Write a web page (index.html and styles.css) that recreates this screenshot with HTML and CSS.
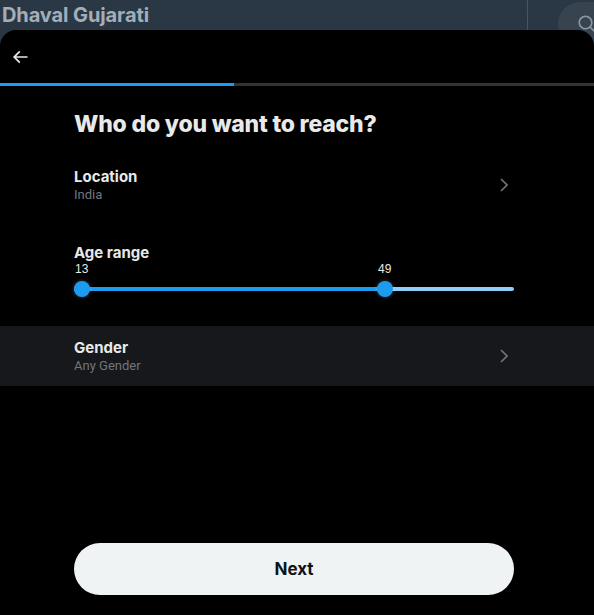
FILE: index.html
```html
<!DOCTYPE html>
<html lang="en">
<head>
<meta charset="utf-8">
<title>Who do you want to reach?</title>
<link rel="stylesheet" href="styles.css">
</head>
<body>
<div class="page">
  <header class="topbar">
    <div class="profile-name">Dhaval Gujarati</div>
    <div class="divider"></div>
    <div class="search">
      <svg viewBox="0 0 24 24" width="20" height="20"><path fill="currentColor" d="M10.25 3.75c-3.59 0-6.5 2.910-6.5 6.5s2.91 6.5 6.5 6.5c1.795 0 3.419-.726 4.596-1.904 1.178-1.177 1.904-2.801 1.904-4.596 0-3.590-2.910-6.5-6.5-6.5zm-8.5 6.5c0-4.694 3.806-8.5 8.5-8.5s8.5 3.806 8.5 8.5c0 1.986-.682 3.815-1.824 5.262l4.781 4.781-1.414 1.414-4.781-4.781c-1.447 1.142-3.276 1.824-5.262 1.824-4.694 0-8.5-3.806-8.5-8.5z"/></svg>
    </div>
  </header>

  <section class="modal">
    <div class="modal-head">
      <button class="back" aria-label="Back">
        <svg viewBox="0 0 24 24" width="20" height="20"><path fill="currentColor" d="M7.414 13l5.043 5.04-1.414 1.42L3.586 12l7.457-7.46 1.414 1.42L7.414 11H21v2H7.414z"/></svg>
      </button>
    </div>
    <div class="progress"><div class="progress-fill"></div></div>

    <h2 class="title">Who do you want to reach?</h2>

    <div class="row">
      <div class="row-text">
        <div class="row-label">Location</div>
        <div class="row-value">India</div>
      </div>
      <svg class="chev" viewBox="0 0 8 14" width="8" height="14"><path d="M1 1l6 6-6 6" fill="none" stroke="currentColor" stroke-width="1.6"/></svg>
    </div>

    <div class="age">
      <div class="row-label">Age range</div>
      <div class="slider">
        <div class="track"></div>
        <div class="track-active"></div>
        <div class="handle h-min"><span class="handle-label">13</span><span class="thumb"></span></div>
        <div class="handle h-max"><span class="handle-label">49</span><span class="thumb"></span></div>
      </div>
    </div>

    <div class="row row-hover">
      <div class="row-text">
        <div class="row-label">Gender</div>
        <div class="row-value">Any Gender</div>
      </div>
      <svg class="chev" viewBox="0 0 8 14" width="8" height="14"><path d="M1 1l6 6-6 6" fill="none" stroke="currentColor" stroke-width="1.6"/></svg>
    </div>

    <div class="footer">
      <button class="next">Next</button>
    </div>
  </section>
</div>
</body>
</html>
```

FILE: styles.css
```css
* { box-sizing: border-box; }
html, body { margin: 0; padding: 0; }
body {
  width: 594px;
  height: 615px;
  overflow: hidden;
  font-family: "Inter", "Roboto", "Liberation Sans", sans-serif;
  background: #202b36;
}
.page {
  display: flex;
  flex-direction: column;
  height: 615px;
  background: linear-gradient(180deg, #2a3846 0%, #222e3a 60%, #1c2630 100%);
}
.topbar {
  height: 30px;
  display: flex;
  align-items: flex-start;
  flex-shrink: 0;
}
.profile-name {
  margin-left: 2px;
  margin-top: 3px;
  font-size: 20px;
  font-weight: 700;
  line-height: 24px;
  color: #a3aeb9;
  letter-spacing: -0.1px;
}
.divider {
  margin-left: auto;
  width: 1px;
  height: 30px;
  background: #4a5561;
}
.search {
  margin-left: 30px;
  margin-top: 2px;
  width: 36px;
  height: 44px;
  border-radius: 22px 0 0 22px;
  background: #37434f;
  color: #8b96a1;
  display: flex;
  align-items: center;
  padding-left: 19px;
  overflow: hidden;
  flex-shrink: 0;
}
.search svg { flex-shrink: 0; }
.modal {
  position: relative;
  flex: 1;
  background: #000;
  border-radius: 16px 16px 0 0;
  display: flex;
  flex-direction: column;
  color: #e7e9ea;
}
.modal-head {
  height: 53px;
  display: flex;
  align-items: center;
  padding-left: 10px;
}
.back {
  background: none;
  border: 0;
  padding: 0;
  width: 20px;
  height: 20px;
  margin-top: 1px;
  color: #e7e9ea;
  display: flex;
}
.progress {
  height: 3px;
  background: #2f3336;
}
.progress-fill {
  width: 234px;
  height: 3px;
  background: #1d9bf0;
}
.title {
  margin: 24px 0 0 74px;
  font-size: 23px;
  line-height: 28px;
  font-weight: 800;
  letter-spacing: -0.2px;
  color: #e7e9ea;
}
.row {
  margin-top: 17px;
  height: 60px;
  display: flex;
  align-items: center;
  padding: 0 86px 0 74px;
}
.row-hover {
  margin-top: 27px;
  background: #16181c;
}
.row-text { flex: 1; }
.row-label {
  font-size: 15px;
  line-height: 20px;
  font-weight: 700;
  color: #e7e9ea;
}
.row-value {
  font-size: 13px;
  line-height: 16px;
  color: #71767b;
  font-family: "Roboto", "Inter", sans-serif;
}
.chev { color: #71767b; }
.age {
  margin-top: 28px;
  padding-left: 74px;
  width: 514px;
}
.slider {
  position: relative;
  height: 36px;
}
.track {
  position: absolute;
  left: 0; right: 0;
  top: 24px;
  height: 4px;
  border-radius: 2px;
  background: #8ecdf8;
}
.track-active {
  position: absolute;
  left: 0;
  width: 311px;
  top: 24px;
  height: 4px;
  background: #1d9bf0;
}
.handle {
  position: absolute;
  top: 0;
  display: flex;
  flex-direction: column;
  align-items: flex-start;
}
.h-min { left: 0; }
.h-max { left: 303px; }
.handle-label {
  font-size: 12px;
  line-height: 13px;
  color: #e7e9ea;
  font-family: "Liberation Sans", "Inter", sans-serif;
  padding-left: 1px;
  margin-bottom: 5px;
}
.thumb {
  width: 16px;
  height: 16px;
  border-radius: 50%;
  background: #1d9bf0;
  box-shadow: 0 0 4px rgba(255,255,255,0.25);
}
.footer {
  margin-top: auto;
  padding: 0 80px 20px 74px;
}
.next {
  width: 440px;
  height: 52px;
  border: 0;
  border-radius: 26px;
  background: #eff3f4;
  color: #0f1419;
  font-family: "Inter", "Roboto", sans-serif;
  font-size: 17px;
  font-weight: 700;
}
```
